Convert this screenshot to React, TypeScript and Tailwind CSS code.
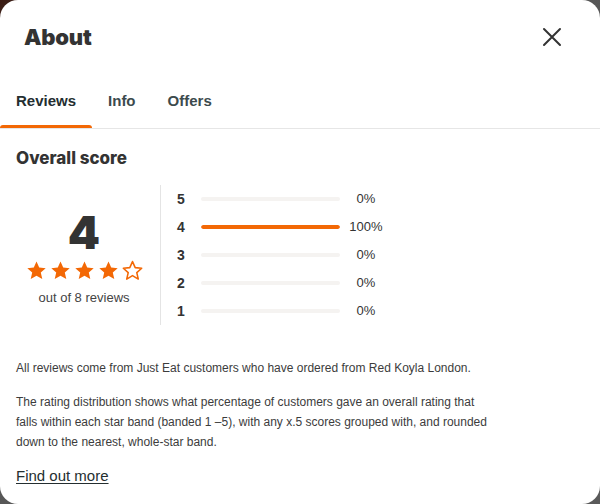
import React from 'react';

const ORANGE = '#f36805';

const Star: React.FC<{ filled: boolean }> = ({ filled }) => (
  <svg width="21" height="21" viewBox="0 0 24 24" className="block">
    <path
      d="M12 1.8l3.1 6.9 7.4.7-5.6 5 1.7 7.4L12 17.9l-6.6 3.9 1.7-7.4-5.6-5 7.4-.7z"
      fill={filled ? ORANGE : '#fff'}
      stroke={ORANGE}
      strokeWidth={filled ? 0 : 1.8}
      strokeLinejoin="round"
    />
  </svg>
);

const rows = [
  { n: 5, pct: 0 },
  { n: 4, pct: 100 },
  { n: 3, pct: 0 },
  { n: 2, pct: 0 },
  { n: 1, pct: 0 },
];

const App: React.FC = () => {
  return (
    <div className="w-[600px] h-[504px] overflow-hidden bg-[linear-gradient(135deg,#3a1a12_0%,#555_12%,#5a5a5a_100%)] font-['Liberation_Sans',sans-serif] text-[#242e30]">
      <div className="h-full bg-white rounded-[18px] flex flex-col">
        <div className="h-[73px] flex items-center justify-between pl-6 pr-[38px]">
          <h1 className="font-['Inter',sans-serif] font-black text-[22px] tracking-[-0.2px] text-[#333] leading-none">About</h1>
          <svg width="20" height="20" viewBox="0 0 20 20" className="block">
            <path d="M2 2L18 18M18 2L2 18" stroke="#333" strokeWidth="2" strokeLinecap="round" />
          </svg>
        </div>

        <div className="flex h-[56px] border-b border-[#e6e6e6]">
          <div className="relative px-4 pt-[2px] flex items-center font-bold text-[15px] text-[#242e30]">
            Reviews
            <div className="absolute left-0 right-0 bottom-0 h-[3px] rounded-t-sm bg-[#f36805]" />
          </div>
          <div className="px-4 pt-[2px] flex items-center font-bold text-[15px] text-[#3c4a4d]">Info</div>
          <div className="px-4 pt-[2px] flex items-center font-bold text-[15px] text-[#3c4a4d]">Offers</div>
        </div>

        <div className="px-4 pt-[17px]">
          <h2 className="font-['Inter',sans-serif] font-extrabold text-[17px] leading-6 text-[#333]">Overall score</h2>

          <div className="flex mt-[15px]">
            <div className="w-[136px] mr-2 flex flex-col items-center justify-center pt-[4px]">
              <div className="font-['Inter',sans-serif] font-black text-[46px] leading-[48px] text-[#333]">4</div>
              <div className="flex gap-[3px] mt-[4px]">
                {[true, true, true, true, false].map((f, i) => (
                  <Star key={i} filled={f} />
                ))}
              </div>
              <div className="mt-[8px] text-[13px] leading-[18px] text-[#444]">out of 8 reviews</div>
            </div>

            <div className="border-l border-[#e4e4e4] pl-4 flex flex-col">
              {rows.map((r) => (
                <div key={r.n} className="h-[28px] flex items-center">
                  <div className="w-[24px] font-bold text-[14px] text-[#333]">{r.n}</div>
                  <div className="w-[139px] h-[4px] rounded-full bg-[#f5f3f1] overflow-hidden">
                    <div className="h-full rounded-full bg-[#f36805]" style={{ width: `${r.pct}%` }} />
                  </div>
                  <div className="w-[52px] text-center text-[13px] text-[#333]">{r.pct}%</div>
                </div>
              ))}
            </div>
          </div>

          <div className="w-[478px] text-[12px] leading-5 text-[#3c3c3c]">
            <p className="mt-[33px]">
              All reviews come from Just Eat customers who have ordered from Red Koyla London.
            </p>
            <p className="mt-[14px]">
              The rating distribution shows what percentage of customers gave an overall rating that falls within each star band (banded 1 –5), with any x.5 scores grouped with, and rounded down to the nearest, whole-star band.
            </p>
          </div>
          <a className="block mt-[13px] text-[15px] leading-[22px] underline underline-offset-2 text-[#242e30]">Find out more</a>
        </div>
      </div>
    </div>
  );
};

export default App;
